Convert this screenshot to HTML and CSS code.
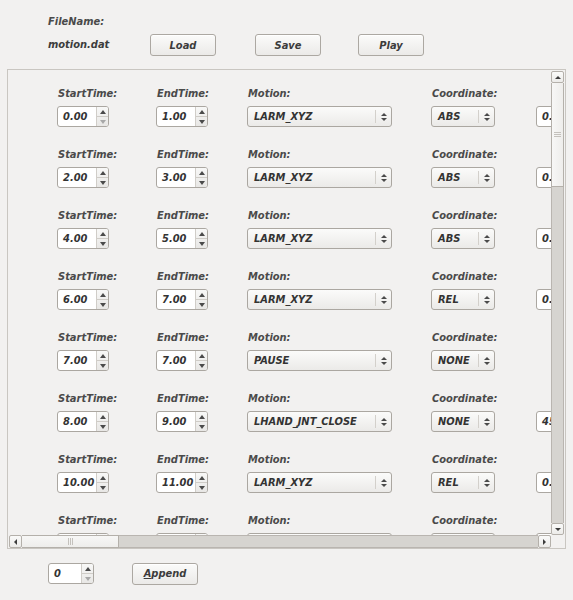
FILE: index.html
```html
<!DOCTYPE html>
<html>
<head>
<meta charset="utf-8">
<link rel="stylesheet" href="styles.css">
</head>
<body>
<div class="top">
  <div class="fname-label">FileName:</div>
  <div class="file-row">
    <div class="fname">motion.dat</div>
    <button class="btn btn-load">Load</button>
    <button class="btn btn-save">Save</button>
    <button class="btn btn-play">Play</button>
  </div>
</div>

<div class="frame">
  <div class="viewport">
    <div class="rows">
      <div class="row">
        <div class="cell c1"><div class="lbl">StartTime:</div><div class="spin"><span class="val">0.00</span><span class="sbtn"><i class="up"></i><i class="dn dis"></i></span></div></div>
        <div class="cell c2"><div class="lbl">EndTime:</div><div class="spin"><span class="val">1.00</span><span class="sbtn"><i class="up"></i><i class="dn"></i></span></div></div>
        <div class="cell c3"><div class="lbl">Motion:</div><div class="combo wide"><span class="val">LARM_XYZ</span><span class="cbtn"><i class="up"></i><i class="dn"></i></span></div></div>
        <div class="cell c4"><div class="lbl">Coordinate:</div><div class="combo narrow"><span class="val">ABS</span><span class="cbtn"><i class="up"></i><i class="dn"></i></span></div></div>
        <div class="cell c5"><div class="lbl">&nbsp;</div><div class="spin extra"><span class="val">0.00</span></div></div>
      </div>
      <div class="row">
        <div class="cell c1"><div class="lbl">StartTime:</div><div class="spin"><span class="val">2.00</span><span class="sbtn"><i class="up"></i><i class="dn"></i></span></div></div>
        <div class="cell c2"><div class="lbl">EndTime:</div><div class="spin"><span class="val">3.00</span><span class="sbtn"><i class="up"></i><i class="dn"></i></span></div></div>
        <div class="cell c3"><div class="lbl">Motion:</div><div class="combo wide"><span class="val">LARM_XYZ</span><span class="cbtn"><i class="up"></i><i class="dn"></i></span></div></div>
        <div class="cell c4"><div class="lbl">Coordinate:</div><div class="combo narrow"><span class="val">ABS</span><span class="cbtn"><i class="up"></i><i class="dn"></i></span></div></div>
        <div class="cell c5"><div class="lbl">&nbsp;</div><div class="spin extra"><span class="val">0.00</span></div></div>
      </div>
      <div class="row">
        <div class="cell c1"><div class="lbl">StartTime:</div><div class="spin"><span class="val">4.00</span><span class="sbtn"><i class="up"></i><i class="dn"></i></span></div></div>
        <div class="cell c2"><div class="lbl">EndTime:</div><div class="spin"><span class="val">5.00</span><span class="sbtn"><i class="up"></i><i class="dn"></i></span></div></div>
        <div class="cell c3"><div class="lbl">Motion:</div><div class="combo wide"><span class="val">LARM_XYZ</span><span class="cbtn"><i class="up"></i><i class="dn"></i></span></div></div>
        <div class="cell c4"><div class="lbl">Coordinate:</div><div class="combo narrow"><span class="val">ABS</span><span class="cbtn"><i class="up"></i><i class="dn"></i></span></div></div>
        <div class="cell c5"><div class="lbl">&nbsp;</div><div class="spin extra"><span class="val">0.00</span></div></div>
      </div>
      <div class="row">
        <div class="cell c1"><div class="lbl">StartTime:</div><div class="spin"><span class="val">6.00</span><span class="sbtn"><i class="up"></i><i class="dn"></i></span></div></div>
        <div class="cell c2"><div class="lbl">EndTime:</div><div class="spin"><span class="val">7.00</span><span class="sbtn"><i class="up"></i><i class="dn"></i></span></div></div>
        <div class="cell c3"><div class="lbl">Motion:</div><div class="combo wide"><span class="val">LARM_XYZ</span><span class="cbtn"><i class="up"></i><i class="dn"></i></span></div></div>
        <div class="cell c4"><div class="lbl">Coordinate:</div><div class="combo narrow"><span class="val">REL</span><span class="cbtn"><i class="up"></i><i class="dn"></i></span></div></div>
        <div class="cell c5"><div class="lbl">&nbsp;</div><div class="spin extra"><span class="val">0.00</span></div></div>
      </div>
      <div class="row">
        <div class="cell c1"><div class="lbl">StartTime:</div><div class="spin"><span class="val">7.00</span><span class="sbtn"><i class="up"></i><i class="dn"></i></span></div></div>
        <div class="cell c2"><div class="lbl">EndTime:</div><div class="spin"><span class="val">7.00</span><span class="sbtn"><i class="up"></i><i class="dn"></i></span></div></div>
        <div class="cell c3"><div class="lbl">Motion:</div><div class="combo wide"><span class="val">PAUSE</span><span class="cbtn"><i class="up"></i><i class="dn"></i></span></div></div>
        <div class="cell c4"><div class="lbl">Coordinate:</div><div class="combo narrow"><span class="val">NONE</span><span class="cbtn"><i class="up"></i><i class="dn"></i></span></div></div>
        <div class="cell c5"></div>
      </div>
      <div class="row">
        <div class="cell c1"><div class="lbl">StartTime:</div><div class="spin"><span class="val">8.00</span><span class="sbtn"><i class="up"></i><i class="dn"></i></span></div></div>
        <div class="cell c2"><div class="lbl">EndTime:</div><div class="spin"><span class="val">9.00</span><span class="sbtn"><i class="up"></i><i class="dn"></i></span></div></div>
        <div class="cell c3"><div class="lbl">Motion:</div><div class="combo wide"><span class="val">LHAND_JNT_CLOSE</span><span class="cbtn"><i class="up"></i><i class="dn"></i></span></div></div>
        <div class="cell c4"><div class="lbl">Coordinate:</div><div class="combo narrow"><span class="val">NONE</span><span class="cbtn"><i class="up"></i><i class="dn"></i></span></div></div>
        <div class="cell c5"><div class="lbl">&nbsp;</div><div class="spin extra"><span class="val">45.00</span></div></div>
      </div>
      <div class="row">
        <div class="cell c1"><div class="lbl">StartTime:</div><div class="spin"><span class="val">10.00</span><span class="sbtn"><i class="up"></i><i class="dn"></i></span></div></div>
        <div class="cell c2"><div class="lbl">EndTime:</div><div class="spin"><span class="val">11.00</span><span class="sbtn"><i class="up"></i><i class="dn"></i></span></div></div>
        <div class="cell c3"><div class="lbl">Motion:</div><div class="combo wide"><span class="val">LARM_XYZ</span><span class="cbtn"><i class="up"></i><i class="dn"></i></span></div></div>
        <div class="cell c4"><div class="lbl">Coordinate:</div><div class="combo narrow"><span class="val">REL</span><span class="cbtn"><i class="up"></i><i class="dn"></i></span></div></div>
        <div class="cell c5"><div class="lbl">&nbsp;</div><div class="spin extra"><span class="val">0.00</span></div></div>
      </div>
      <div class="row">
        <div class="cell c1"><div class="lbl">StartTime:</div><div class="spin"><span class="val">12.00</span><span class="sbtn"><i class="up"></i><i class="dn"></i></span></div></div>
        <div class="cell c2"><div class="lbl">EndTime:</div><div class="spin"><span class="val">13.00</span><span class="sbtn"><i class="up"></i><i class="dn"></i></span></div></div>
        <div class="cell c3"><div class="lbl">Motion:</div><div class="combo wide"><span class="val">LARM_XYZ</span><span class="cbtn"><i class="up"></i><i class="dn"></i></span></div></div>
        <div class="cell c4"><div class="lbl">Coordinate:</div><div class="combo narrow"><span class="val">ABS</span><span class="cbtn"><i class="up"></i><i class="dn"></i></span></div></div>
        <div class="cell c5"><div class="lbl">&nbsp;</div><div class="spin extra"><span class="val">0.00</span></div></div>
      </div>
    </div>
  </div>
  <div class="vscroll">
    <div class="sb-btn vb"><i class="tri-up"></i></div>
    <div class="vhandle"><span class="grip-h"></span></div>
    <div class="vtrack"></div>
    <div class="sb-btn vb"><i class="tri-dn"></i></div>
  </div>
  <div class="hscroll">
    <div class="sb-btn hb"><i class="tri-lt"></i></div>
    <div class="hhandle"><span class="grip-v"></span></div>
    <div class="htrack"></div>
    <div class="sb-btn hb"><i class="tri-rt"></i></div>
  </div>
  <div class="corner"></div>
</div>

<div class="bottom">
  <div class="spin small"><span class="val">0</span><span class="sbtn"><i class="up"></i><i class="dn dis"></i></span></div>
  <button class="btn btn-append"><u>A</u>ppend</button>
</div>
</body>
</html>
```
FILE: styles.css
```css
* { box-sizing: border-box; }
html, body { margin: 0; padding: 0; }
body {
  width: 573px;
  height: 600px;
  background: #f2f1f0;
  font-family: "DejaVu Sans Condensed", "DejaVu Sans", sans-serif;
  font-stretch: condensed;
  font-weight: bold;
  font-style: italic;
  font-size: 11px;
  color: #3c3c3c;
  overflow: hidden;
}
.top { padding: 15px 0 0 48px; }
.fname-label { line-height: 14px; height: 14px; color: #4a4a4a; }
.file-row { display: flex; align-items: center; margin-top: 5px; height: 22px; }
.fname { width: 102px; line-height: 14px; }
.btn {
  font: inherit;
  color: #3c3c3c;
  width: 66px;
  height: 22px;
  padding: 0;
  border: 1px solid #aca8a2;
  border-radius: 3px;
  background: linear-gradient(#fbfbfa, #ebeae8);
  box-shadow: inset 0 1px 0 #ffffff;
}
.btn-save { margin-left: 39px; }
.btn-play { margin-left: 37px; }

.frame {
  margin: 13px 0 0 7px;
  width: 559px;
  height: 480px;
  border: 1px solid #c9c6c1;
  display: grid;
  grid-template-columns: 543px 14px;
  grid-template-rows: 465px 13px;
}
.viewport { overflow: hidden; }
.rows { padding: 16px 0 0 49px; }
.row { display: flex; height: 61px; }
.cell { flex: none; }
.c1 { width: 99px; }
.c2 { width: 91px; }
.c3 { width: 184px; }
.c4 { width: 105px; }
.c5 { width: 80px; }
.lbl { line-height: 15px; height: 15px; margin-bottom: 5px; padding-left: 1px; color: #4a4a4a; }

.spin {
  display: flex;
  width: 52px;
  height: 21px;
  border: 1px solid #aba7a1;
  border-radius: 3px;
  background: #ffffff;
  overflow: hidden;
}
.spin .val { flex: 1; line-height: 19px; padding-left: 5px; color: #333; }
.sbtn {
  width: 12px;
  display: flex;
  flex-direction: column;
  border-left: 1px solid #d0cdc8;
  background: linear-gradient(#f8f8f7, #e8e7e5);
}
.sbtn i { flex: 1; position: relative; }
.sbtn i.up { border-bottom: 1px solid #cfccc7; }
.sbtn i.up::after, .sbtn i.dn::after {
  content: "";
  position: absolute;
  left: 50%;
  top: 50%;
  margin-left: -3px;
  border-left: 3px solid transparent;
  border-right: 3px solid transparent;
}
.sbtn i.up::after { border-bottom: 4px solid #4a4a4a; margin-top: -2px; }
.sbtn i.dn::after { border-top: 4px solid #4a4a4a; margin-top: -2px; }
.sbtn i.dn.dis::after { border-top-color: #a8a8a8; }
.spin.extra { width: 60px; }
.spin.small { width: 46px; }

.combo {
  display: flex;
  height: 21px;
  border: 1px solid #aba7a1;
  border-radius: 3px;
  background: linear-gradient(#fbfbfa, #ebeae8);
}
.combo.wide { width: 145px; }
.combo.narrow { width: 64px; }
.combo .val { flex: 1; line-height: 19px; padding-left: 6px; color: #333; }
.cbtn {
  width: 16px;
  margin: 3px 0;
  border-left: 1px solid #d3d0cb;
  display: flex;
  flex-direction: column;
  justify-content: center;
  align-items: center;
  gap: 2px;
}
.cbtn i { display: block; width: 0; height: 0; border-left: 3px solid transparent; border-right: 3px solid transparent; }
.cbtn i.up { border-bottom: 3px solid #4a4a4a; }
.cbtn i.dn { border-top: 3px solid #4a4a4a; }

.vscroll {
  display: flex;
  flex-direction: column;
  padding: 1px 1px 0 0;
  background: #f2f1f0;
}
.sb-btn {
  flex: none;
  border: 1px solid #b4b0aa;
  background: linear-gradient(#fafaf9, #ecebe9);
  display: flex;
  align-items: center;
  justify-content: center;
}
.vb { height: 12px; border-radius: 2px; }
.vhandle {
  flex: none;
  height: 104px;
  border: 1px solid #b4b0aa;
  border-top: none;
  background: linear-gradient(90deg, #f7f7f6, #eeedeb);
  display: flex;
  align-items: center;
  justify-content: center;
}
.vtrack { flex: 1; background: #d6d4d0; border-left: 1px solid #b9b5b0; border-right: 1px solid #b9b5b0; }
.grip-h { width: 7px; height: 5px; border-top: 1px solid #c4c1bc; border-bottom: 1px solid #c4c1bc; position: relative; }
.grip-h::after { content: ""; position: absolute; left: 0; right: 0; top: 1px; border-top: 1px solid #c4c1bc; }

.hscroll {
  display: flex;
  padding: 0 0 0 1px;
  grid-column: 1;
  grid-row: 2;
}
.hb { width: 13px; border-radius: 2px; }
.hhandle {
  flex: none;
  width: 97px;
  border: 1px solid #b4b0aa;
  border-left: none;
  background: linear-gradient(#f7f7f6, #eeedeb);
  display: flex;
  align-items: center;
  justify-content: center;
}
.htrack { flex: 1; background: #d6d4d0; border-top: 1px solid #b9b5b0; border-bottom: 1px solid #b9b5b0; }
.grip-v { width: 5px; height: 7px; border-left: 1px solid #c4c1bc; border-right: 1px solid #c4c1bc; position: relative; }
.grip-v::after { content: ""; position: absolute; top: 0; bottom: 0; left: 1px; border-left: 1px solid #c4c1bc; }
.corner { background: #f2f1f0; }

.tri-up, .tri-dn, .tri-lt, .tri-rt { display: block; width: 0; height: 0; }
.tri-up { border-left: 3px solid transparent; border-right: 3px solid transparent; border-bottom: 3px solid #3c3c3c; }
.tri-dn { border-left: 3px solid transparent; border-right: 3px solid transparent; border-top: 3px solid #3c3c3c; }
.tri-lt { border-top: 3px solid transparent; border-bottom: 3px solid transparent; border-right: 3px solid #3c3c3c; }
.tri-rt { border-top: 3px solid transparent; border-bottom: 3px solid transparent; border-left: 3px solid #3c3c3c; }

.bottom { display: flex; align-items: center; margin: 14px 0 0 48px; height: 21px; }
.btn-append { margin-left: 38px; }
.btn-append u { text-decoration: underline; }
```
